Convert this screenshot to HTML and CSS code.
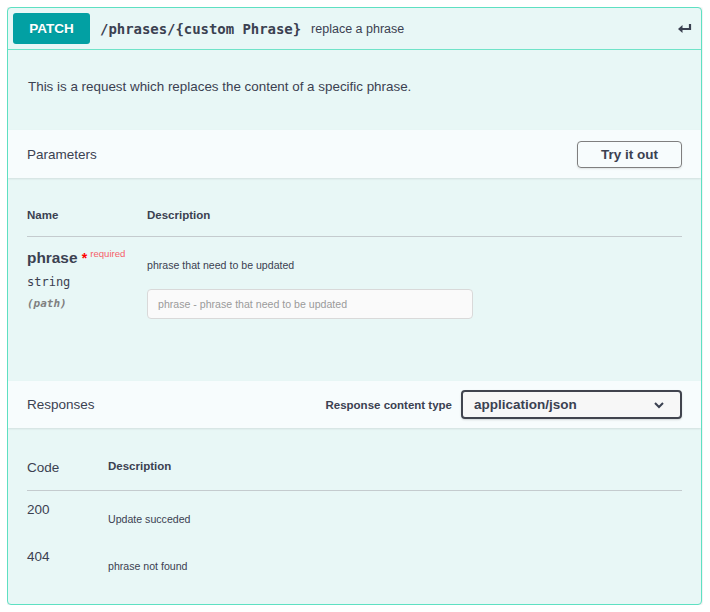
FILE: index.html
```html
<!DOCTYPE html>
<html>
<head>
<meta charset="utf-8">
<link rel="stylesheet" href="styles.css">
</head>
<body>
<div class="opblock">
  <div class="summary">
    <span class="method">PATCH</span>
    <span class="path">/phrases/{custom Phrase}</span>
    <span class="summary-text">replace a phrase</span>
    <span class="spacer"></span>
    <svg class="enter" width="16" height="12" viewBox="0 0 16 12"><path d="M13 1v5H4" fill="none" stroke="#3b4151" stroke-width="2.2"/><path d="M1 6l4.5-4v8z" fill="#3b4151"/></svg>
  </div>
  <div class="description">
    <p>This is a request which replaces the content of a specific phrase.</p>
  </div>
  <div class="section-header">
    <h4>Parameters</h4>
    <button class="try">Try it out</button>
  </div>
  <div class="params">
    <div class="prow head">
      <div class="c-name">Name</div>
      <div class="c-desc">Description</div>
    </div>
    <div class="prow body">
      <div class="c-name">
        <div class="pname">phrase <span class="star">*</span><sup class="req">required</sup></div>
        <div class="ptype">string</div>
        <div class="pin">(path)</div>
      </div>
      <div class="c-desc">
        <p class="pdesc">phrase that need to be updated</p>
        <div class="input">phrase - phrase that need to be updated</div>
      </div>
    </div>
  </div>
  <div class="section-header resp">
    <h4>Responses</h4>
    <div class="ctype">
      <label>Response content type</label>
      <div class="select"><span>application/json</span><svg width="12" height="8" viewBox="0 0 12 8"><path d="M2 2l4 4 4-4" fill="none" stroke="#3b4151" stroke-width="2"/></svg></div>
    </div>
  </div>
  <div class="responses">
    <div class="rrow head">
      <div class="r-code">Code</div>
      <div class="r-desc">Description</div>
    </div>
    <div class="rrow">
      <div class="r-code">200</div>
      <div class="r-desc">Update succeded</div>
    </div>
    <div class="rrow">
      <div class="r-code">404</div>
      <div class="r-desc">phrase not found</div>
    </div>
  </div>
</div>
</body>
</html>
```
FILE: styles.css
```css
* { box-sizing: border-box; }
body {
  margin: 7px;
  background: #fff;
  font-family: "Liberation Sans", Arial, sans-serif;
  color: #3b4151;
}
.opblock {
  width: 695px;
  height: 598px;
  border: 1px solid #5ee0c2;
  border-radius: 4px;
  background: #e8f7f6;
  box-shadow: 0 0 3px rgba(0,0,0,.15);
  overflow: hidden;
}
.summary {
  display: flex;
  align-items: center;
  height: 42px;
  padding: 0 8px 0 5px;
  border-bottom: 1px solid #6fe3c8;
}
.method {
  width: 77px;
  height: 31px;
  background: #02a0a3;
  color: #fff;
  border-radius: 3px;
  font-weight: bold;
  font-size: 13.5px;
  display: flex;
  align-items: center;
  justify-content: center;
  text-shadow: 0 1px 0 rgba(0,0,0,.1);
}
.path {
  margin-left: 10px;
  font-family: "DejaVu Sans Mono", monospace;
  font-weight: bold;
  font-size: 14px;
  letter-spacing: -0.05px;
}
.summary-text {
  margin-left: 10px;
  font-size: 12.5px;
}
.spacer { flex: 1; }
.description {
  height: 80px;
  padding: 29px 20px 0;
}
.description p {
  margin: 0;
  font-size: 13.4px;
}
.section-header {
  display: flex;
  align-items: center;
  justify-content: space-between;
  height: 48px;
  padding: 0 19px 0 19px;
  background: #f7fcfd;
  box-shadow: 0 1px 2px rgba(0,0,0,.1);
}
.section-header h4 {
  margin: 0;
  font-size: 13.5px;
  font-weight: normal;
}
.try {
  width: 105px;
  height: 27px;
  border: 1px solid #7f7f7f;
  border-radius: 4px;
  background: transparent;
  font-family: "Liberation Sans", Arial, sans-serif;
  font-weight: bold;
  font-size: 13.5px;
  color: #3b4151;
  box-shadow: 0 1px 2px rgba(0,0,0,.1);
}
.params {
  height: 203px;
  padding: 29px 19px 0;
}
.prow { display: flex; }
.prow.head {
  height: 30px;
  border-bottom: 1px solid #c4cbce;
  font-size: 11.5px;
  font-weight: bold;
}
.prow.head > div { padding-top: 2px; }
.c-name { width: 120px; }
.c-desc { flex: 1; }
.prow.body { padding-top: 8px; }
.pname {
  font-weight: bold;
  font-size: 15.4px;
  line-height: 18px;
}
.star { color: #f00; font-size: 14px; margin-right: 3px; }
.req {
  color: #f65f6a;
  font-size: 9.6px;
  font-weight: normal;
  vertical-align: 6px;
}
.ptype {
  font-family: "DejaVu Sans Mono", monospace;
  font-size: 12px;
  margin-top: 8px;
}
.pin {
  font-family: "DejaVu Sans Mono", monospace;
  font-size: 11px;
  font-style: italic;
  font-weight: bold;
  color: #808080;
  margin-top: 8px;
}
.pdesc {
  margin: 14px 0 0;
  font-size: 10.6px;
}
.input {
  margin-top: 18px;
  width: 326px;
  height: 30px;
  border: 1px solid #d9d9d9;
  border-radius: 4px;
  background: #fafafa;
  font-size: 10.6px;
  color: #9a9a9a;
  padding: 8px 10px 0;
}
.resp { height: 47px; }
.ctype {
  display: flex;
  align-items: center;
  gap: 9px;
}
.ctype label {
  font-size: 11.5px;
  font-weight: bold;
}
.select {
  width: 221px;
  height: 29px;
  border: 2px solid #41444e;
  border-radius: 4px;
  background: #f7f7f7;
  display: flex;
  align-items: center;
  justify-content: space-between;
  padding: 0 15px 0 11px;
  font-weight: bold;
  font-size: 13.5px;
  box-shadow: 0 1px 2px rgba(0,0,0,.15);
}
.responses {
  padding: 30px 19px 0;
}
.rrow { display: flex; height: 47px; }
.rrow.head {
  height: 33px;
  border-bottom: 1px solid #c4cbce;
  margin-bottom: 10px;
}
.r-code { width: 81px; font-size: 13.5px; padding-top: 1px; }
.r-desc { flex: 1; font-size: 10.6px; padding-top: 12px; }
.rrow.head .r-desc { font-size: 11.5px; font-weight: bold; padding-top: 2px; }
.rrow.head .r-code { padding-top: 2px; }
```
